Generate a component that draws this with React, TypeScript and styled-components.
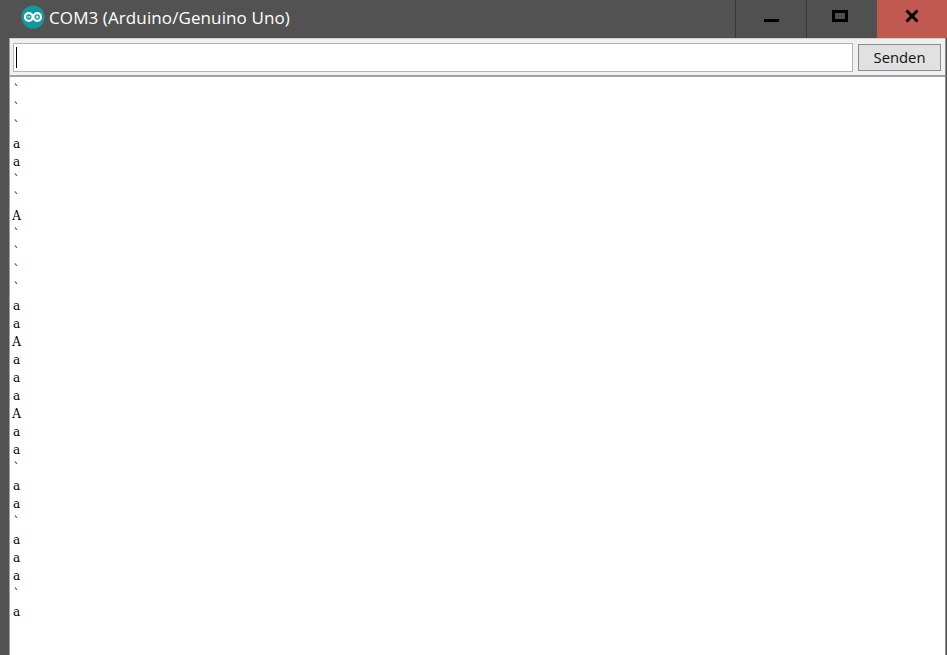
import React from 'react';
import styled, { createGlobalStyle } from 'styled-components';

const GlobalStyle = createGlobalStyle`
  html, body {
    margin: 0;
    padding: 0;
    height: 100%;
    overflow: hidden;
    background: #525252;
  }
  #root {
    height: 100%;
  }
`;

const Window = styled.div`
  width: 947px;
  height: 655px;
  display: flex;
  flex-direction: column;
  background: #525252;
`;

const TitleBar = styled.header`
  height: 38px;
  flex: none;
  display: flex;
  align-items: stretch;
  justify-content: space-between;
`;

const TitleGroup = styled.div`
  display: flex;
  align-items: center;
  gap: 4px;
  padding: 0 0 3px 21px;
`;

const Title = styled.span`
  font-family: "Open Sans", "Noto Sans", sans-serif;
  font-size: 17px;
  color: #ffffff;
  letter-spacing: 0.1px;
  white-space: nowrap;
`;

const Controls = styled.div`
  display: flex;
  align-items: stretch;
`;

const Control = styled.div<{ $close?: boolean; $width: number }>`
  width: ${p => p.$width}px;
  box-sizing: border-box;
  border-left: ${p => (p.$close ? 'none' : '1px solid #393939')};
  background: ${p => (p.$close ? '#c0594f' : '#505050')};
  display: flex;
  justify-content: center;
`;

const Body = styled.main`
  flex: 1;
  min-height: 0;
  margin: 0 1px 0 9px;
  border-left: 1px solid #a0a0a0;
  border-right: 1px solid #8c8c8c;
  display: flex;
  flex-direction: column;
  background: #ffffff;
`;

const Toolbar = styled.div`
  height: 39px;
  flex: none;
  box-sizing: border-box;
  display: flex;
  gap: 5px;
  align-items: center;
  padding: 4px 4px 3px 3px;
  background: #f0f0f0;
  border-top: 1px solid #cfd3d8;
  border-bottom: 2px solid #a0a0a5;
`;

const InputBox = styled.div`
  flex: 1;
  height: 29px;
  box-sizing: border-box;
  background: #ffffff;
  border: 1px solid #b4b4b4;
  display: flex;
  align-items: center;
  padding-left: 2px;
`;

const Caret = styled.span`
  width: 1px;
  height: 21px;
  background: #000000;
`;

const SendButton = styled.button`
  width: 83px;
  height: 27px;
  box-sizing: border-box;
  padding: 0 0 2px;
  background: #e1e1e1;
  border: 1px solid #8a8a8a;
  color: #111111;
  font-family: "Open Sans", "Noto Sans", sans-serif;
  font-size: 14.8px;
`;

const Output = styled.div`
  flex: 1;
  padding: 4px 0 0 2px;
  background: #ffffff;
`;

const Line = styled.div`
  width: 9px;
  height: 18px;
  line-height: 18px;
  text-align: center;
  font-family: "DejaVu Serif", "Liberation Mono", serif;
  font-size: 12px;
  color: #000000;
`;

const IconWrap = styled.span`
  display: flex;
  margin-top: -2px;
`;

const lines = '```aa``A````aaAaaaAaa`aa`aaa`a'.split('');

const ArduinoIcon = () => (
  <IconWrap>
    <svg width="24" height="24" viewBox="0 0 24 24">
      <circle cx="12" cy="12" r="11.5" fill="#14989f" />
      <g fill="none" stroke="#ffffff" strokeWidth="2.2">
        <circle cx="7.8" cy="12" r="3.8" />
        <circle cx="16.2" cy="12" r="3.8" />
      </g>
      <path d="M6.2 12h3.2M14.6 12h3.2M16.2 10.4v3.2" stroke="#ffffff" strokeWidth="1" />
    </svg>
  </IconWrap>
);

const App: React.FC = () => {
  return (
    <Window>
      <GlobalStyle />
      <TitleBar>
        <TitleGroup>
          <ArduinoIcon />
          <Title>COM3 (Arduino/Genuino Uno)</Title>
        </TitleGroup>
        <Controls>
          <Control $width={71}>
            <svg width="16" height="38" viewBox="0 0 16 38">
              <rect x="1" y="19" width="15" height="3" fill="#000000" />
            </svg>
          </Control>
          <Control $width={71}>
            <svg width="20" height="38" viewBox="0 0 20 38">
              <rect x="1.5" y="11.5" width="13" height="9" fill="none" stroke="#000000" strokeWidth="3" />
            </svg>
          </Control>
          <Control $close $width={70}>
            <svg width="14" height="38" viewBox="0 0 14 38">
              <path d="M1.5 10.5l11 11M12.5 10.5l-11 11" stroke="#000000" strokeWidth="3" fill="none" />
            </svg>
          </Control>
        </Controls>
      </TitleBar>
      <Body>
        <Toolbar>
          <InputBox>
            <Caret />
          </InputBox>
          <SendButton>Senden</SendButton>
        </Toolbar>
        <Output>
          {lines.map((ch, i) => (
            <Line key={i}>{ch}</Line>
          ))}
        </Output>
      </Body>
    </Window>
  );
};

export default App;
